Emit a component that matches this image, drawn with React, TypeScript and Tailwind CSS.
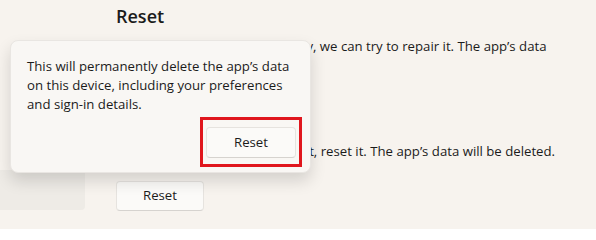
import React from "react"

function WinButton({ children, className = "" }: { children: React.ReactNode; className?: string }) {
  return (
    <button
      className={`flex items-center justify-center rounded-[4px] border border-[#e6e3df] border-b-[#d6d3cf] bg-[#fbfaf8] text-[13.2px] text-[#1b1b1b] ${className}`}
    >
      {children}
    </button>
  )
}

export default function App() {
  return (
    <div className="relative flex h-[229px] w-[596px] overflow-hidden bg-[#f7f3ee] font-['Open_Sans',sans-serif] text-[#1b1b1b]">
      {/* Left nav, mostly hidden */}
      <div className="w-[85px] shrink-0">
        <div className="mt-[170px] h-[40px] rounded-br-[4px] bg-[#eeebe6]" />
      </div>

      {/* Settings content */}
      <div className="ml-[31px] flex flex-col pt-[2px]">
        <h2 className="text-[18px] font-semibold leading-[28px]">Reset</h2>
        <p className="mt-[6px] text-[13.2px] leading-[20px]">
          If this app isn’t working properly, we can try to repair it. The app’s data
          <br />
          won’t be affected.
        </p>
        <WinButton className="invisible mt-[10px] h-[32px] w-[88px]">Repair</WinButton>
        <p className="mt-[23px] text-[13.2px] leading-[20px]">
          If this app still isn’t working right, reset it. The app’s data will be deleted.
        </p>
        <WinButton className="mt-[20px] h-[30px] w-[88px]">Reset</WinButton>
      </div>

      {/* Confirmation flyout */}
      <div className="absolute left-[10px] top-[40px] h-[133px] w-[301px] rounded-[8px] border border-[#e9e6e2] bg-[#f9f7f4] pl-[16px] pr-[8px] pt-[16px] shadow-[0_8px_16px_rgba(0,0,0,0.14)]">
        <p className="text-[13.2px] leading-[19px]">
          This will permanently delete the app’s data
          <br />
          on this device, including your preferences
          <br />
          and sign-in details.
        </p>
        <div className="mt-[3px] flex justify-end">
          <div className="border-[3px] border-[#e0161d] px-[3px] pb-[6px] pt-[7px]">
            <WinButton className="h-[31px] w-[90px]">Reset</WinButton>
          </div>
        </div>
      </div>
    </div>
  )
}
